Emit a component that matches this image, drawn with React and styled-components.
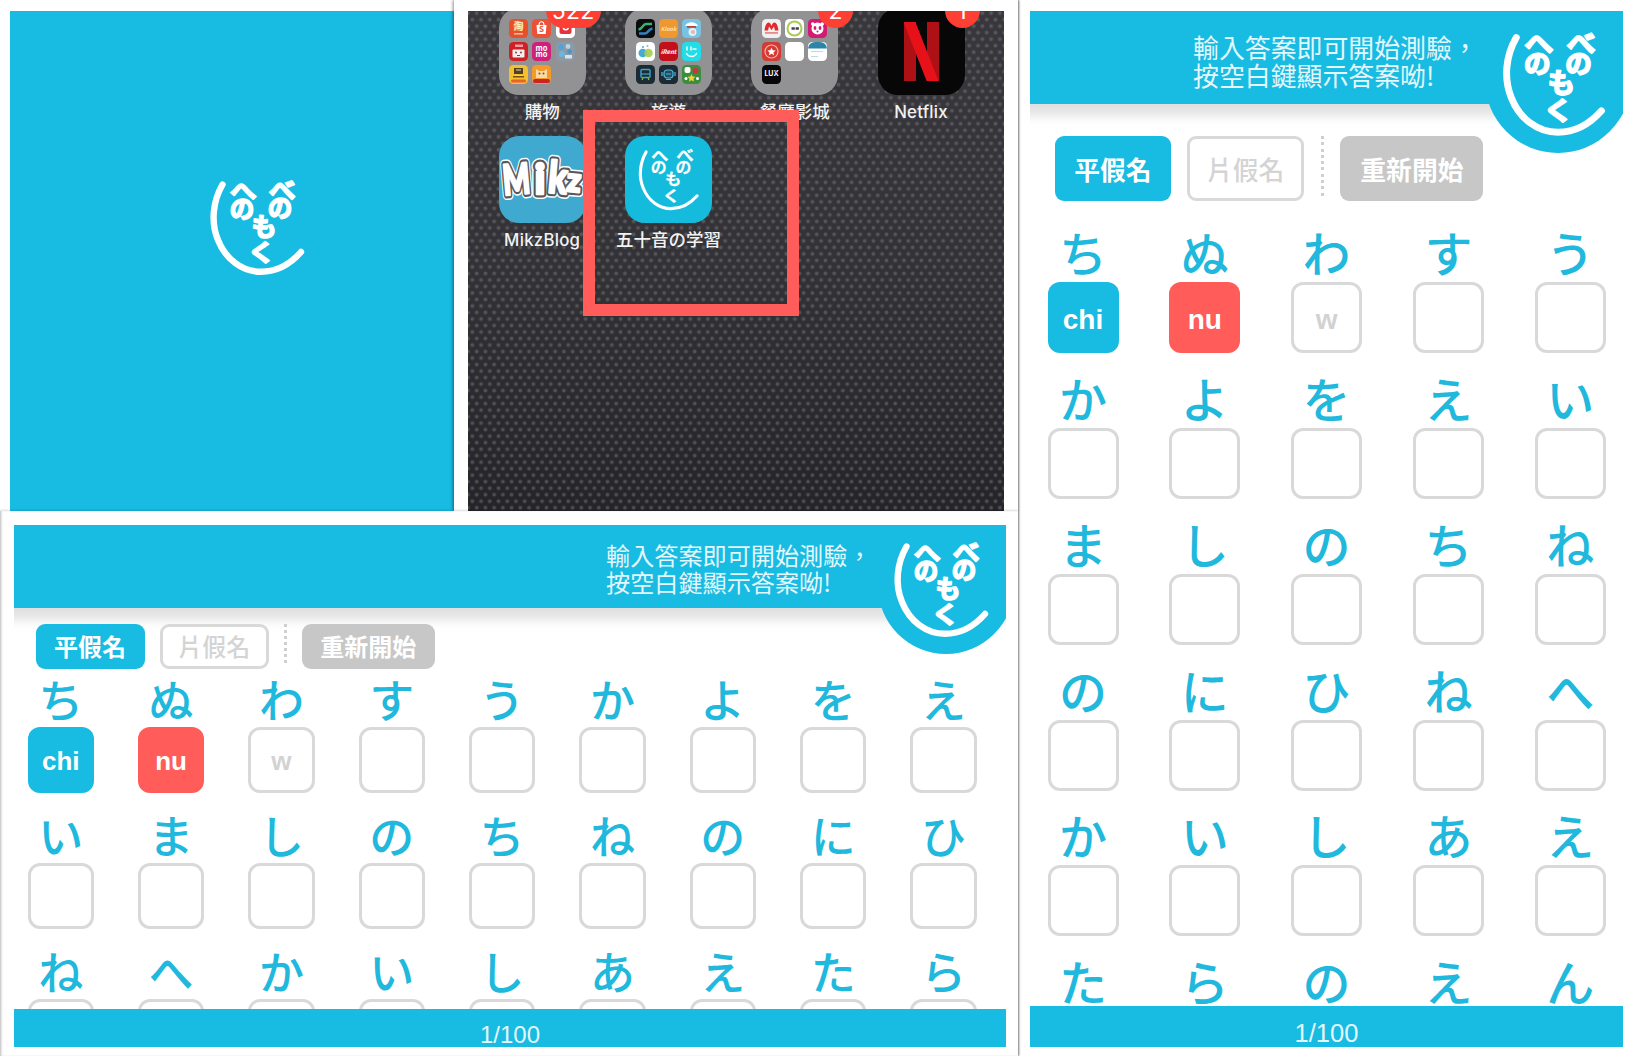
import React from "react";
import styled, { createGlobalStyle, css } from "styled-components";

const BLUE = "#18bbe2";
const RED = "#ff5c5a";
const LINE = "#d9d9d9";
const KANA_FONT = '"Noto Sans CJK JP", sans-serif';
const TC_FONT = '"Liberation Sans", "Noto Sans CJK TC", sans-serif';

const GlobalStyle = createGlobalStyle`
  body { margin: 0; background: #fff; }
  * { box-sizing: border-box; }
`;

const Page = styled.main`
  display: flex;
  width: 1633px;
  height: 1056px;
  overflow: hidden;
  background: #fff;
  font-family: ${TC_FONT};
`;

const LeftColumn = styled.div`
  display: flex;
  flex-direction: column;
  width: 1018px;
  flex: none;
  position: relative;
  z-index: 1;
  box-shadow: 1px 0 2px rgba(0, 0, 0, 0.5);
`;

const TopRow = styled.div`
  display: flex;
  height: 511px;
  flex: none;
`;

const SplashCard = styled.section`
  width: 454px;
  flex: none;
  padding: 11px 0 0 10px;
  background: #fff;
`;

const SplashScreen = styled.div`
  height: 500px;
  padding: 149px 0 0 180px;
  background: ${BLUE};
`;

const HomeCard = styled.section`
  flex: 1;
  padding: 11px 14px 0 14px;
  background: #fff;
  box-shadow: -1px 0 3px rgba(0, 0, 0, 0.45);
`;

const HomeScreen = styled.div`
  position: relative;
  height: 500px;
  overflow: hidden;
  background:
    radial-gradient(circle at 4.35px 3.25px, rgba(128, 126, 134, 0.45) 1.3px, transparent 2.4px) 0 5.4px / 8.72px 13.02px,
    radial-gradient(circle at 4.35px 3.25px, rgba(128, 126, 134, 0.45) 1.3px, transparent 2.4px) 4.36px 11.9px / 8.72px 13.02px,
    linear-gradient(#38373b, #333236 50%, #252428);
`;

const AppGrid = styled.div`
  display: grid;
  grid-template-columns: repeat(4, 126.3px);
  grid-auto-rows: 127.7px;
  margin: -3px 0 0 11px;
`;

const AppCell = styled.div`
  display: flex;
  flex-direction: column;
  align-items: center;
`;

const AppTile = styled.div`
  position: relative;
  width: 87px;
  height: 87px;
  flex: none;
  border-radius: 20px;
  background: ${(p) => p.$bg};
`;

const AppLabel = styled.span`
  margin-top: 4px;
  height: 24px;
  line-height: ${(p) => (p.$latin ? 26 : 24)}px;
  white-space: nowrap;
  color: #f2f2f2;
  font-family: ${(p) => (p.$latin ? "Inter, sans-serif" : '"Noto Sans CJK TC", sans-serif')};
  font-size: ${(p) => (p.$latin ? 16.8 : 17.5)}px;
  font-weight: 500;
  letter-spacing: ${(p) => (p.$latin ? 0.25 : 0)}px;
`;

const FolderTile = styled(AppTile)`
  display: grid;
  grid-template-columns: repeat(3, 19px);
  grid-auto-rows: 19px;
  gap: 4.2px;
  padding: 11px 0 0 10.6px;
`;

const Badge = styled.span`
  position: absolute;
  top: -15px;
  right: -15px;
  min-width: 35px;
  height: 35px;
  padding: 0 ${(p) => (p.$wide ? 6 : 0)}px;
  border-radius: 18px;
  background: #fe3f34;
  color: #fff;
  font: 400 23px/36px Inter, sans-serif;
  letter-spacing: 0.3px;
  text-align: center;
`;

const Highlight = styled.div`
  position: absolute;
  left: 115px;
  top: 99px;
  width: 216px;
  height: 206px;
  border: 12px solid ${RED};
`;

const NetflixMark = styled.div`
  position: absolute;
  left: 26px;
  top: 14px;
  display: flex;
  justify-content: space-between;
  width: 35px;
  height: 59px;
`;

const NetflixBar = styled.i`
  width: 12px;
  height: 59px;
  background: #ad1015;
`;

const NetflixSash = styled.i`
  position: absolute;
  inset: 0;
  background: #e61119;
  clip-path: polygon(0 0, 34% 0, 100% 100%, 66% 100%);
`;

/* ---- quiz screens ---- */

const QuizCard = styled.section`
  flex: 1;
  min-width: 0;
  min-height: 0;
  background: #fff;
  ${(p) =>
    p.$wide
      ? css`
          padding: 14px 12px 9px 14px;
          border-left: 1px solid #cfcfcf;
          box-shadow: 0 -1px 2px rgba(0, 0, 0, 0.14), inset 1px 0 2px rgba(0, 0, 0, 0.12);
          position: relative;
        `
      : css`
          padding: 11px 10px 9.5px 12px;
        `}
`;

const Screen = styled.div`
  display: flex;
  flex-direction: column;
  height: 100%;
  position: relative;
  overflow: hidden;
  margin-left: ${(p) => (p.$wide ? -1 : 0)}px;
`;

const Header = styled.header`
  position: relative;
  z-index: 1;
  flex: none;
  height: ${(p) => (p.$wide ? 83 : 93)}px;
  padding: ${(p) => (p.$wide ? "17px 0 0 592px" : "21.5px 0 0 163px")};
  background: ${BLUE};
`;

const HeaderShade = styled.div`
  flex: none;
  height: 24px;
  margin-bottom: ${(p) => (p.$wide ? -8.5 : 8)}px;
  background: linear-gradient(#dfdfdf, #e9e8e8 8px, #fbfbfb 17px, #fff 22px);
`;

const Hint = styled.p`
  margin: 0;
  color: #e4f7fc;
  font-family: "Noto Sans CJK TC", sans-serif;
  font-weight: 400;
  white-space: pre;
  font-size: ${(p) => (p.$wide ? 24.15 : 25.9)}px;
  line-height: ${(p) => (p.$wide ? 26.8 : 28.8)}px;
`;

const Medallion = styled.div`
  position: absolute;
  border-radius: 50%;
  background: ${BLUE};
  ${(p) =>
    p.$wide
      ? css`left: 864px; top: -7px; width: 136px; height: 136px;`
      : css`left: 455px; top: -4px; width: 146px; height: 146px;`}
`;

const MedallionLogo = styled.div`
  position: absolute;
  ${(p) => (p.$wide ? css`left: 860px; top: -3px;` : css`left: 450.5px; top: 0;`)}
`;

const Toolbar = styled.nav`
  display: flex;
  position: relative;
  flex: none;
  height: ${(p) => (p.$wide ? 45.5 : 65)}px;
  padding-left: ${(p) => (p.$wide ? 21.5 : 24.5)}px;
`;

const ToolButton = styled.button`
  display: block;
  flex: none;
  height: 100%;
  padding: 0 0 ${(p) => (p.$wide ? 1.5 : 0)}px;
  font-family: "Noto Sans CJK TC", sans-serif;
  font-weight: ${(p) => (p.$kind === "off" ? 500 : 700)};
  border-radius: 9px;
  border: ${(p) => (p.$kind === "off" ? `3px solid ${LINE}` : "0")};
  background: ${(p) => ({ on: BLUE, off: "#fff", reset: "#c7c7c7" })[p.$kind]};
  color: ${(p) => (p.$kind === "off" ? "#d4d4d4" : "#fff")};
  ${(p) =>
    p.$wide
      ? css`
          width: ${p.$kind === "reset" ? 133 : 109}px;
          font-size: 24px;
          margin-left: ${p.$kind === "off" ? 15.3 : 0}px;
        `
      : css`
          width: ${p.$kind === "reset" ? 143 : 116.8}px;
          font-size: 25.8px;
          margin-left: ${p.$kind === "off" ? 16 : 0}px;
        `}
`;

const DottedRule = styled.i`
  flex: none;
  width: 3px;
  height: ${(p) => (p.$wide ? 40 : 60)}px;
  margin: ${(p) => (p.$wide ? "0 14.8px 0 15.2px" : "0 16.3px 0 17px")};
  background: repeating-linear-gradient(
    #cfcfcf 0 3px,
    transparent 3px ${(p) => (p.$wide ? 6 : 6.3)}px
  );
`;

const Board = styled.div`
  flex: 1;
  min-height: 0;
  overflow: hidden;
  display: grid;
  justify-content: start;
  align-content: start;
  ${(p) =>
    p.$wide
      ? css`
          grid-template-columns: repeat(9, 110.35px);
          grid-auto-rows: 136.3px;
          padding: 2.7px 0 0 13.5px;
        `
      : css`
          grid-template-columns: repeat(5, 121.8px);
          grid-auto-rows: 145.8px;
          padding: 25.3px 0 0 17.5px;
        `}
`;

const Cell = styled.div`
  display: flex;
  flex-direction: column;
  align-items: center;
  width: ${(p) => (p.$wide ? 66.5 : 71)}px;
`;

const Kana = styled.span`
  flex: none;
  height: ${(p) => (p.$wide ? 55 : 56)}px;
  line-height: ${(p) => (p.$wide ? 53 : 51)}px;
  color: #20b8dc;
  font-family: ${KANA_FONT};
  font-weight: 500;
  font-size: ${(p) => (p.$wide ? 45 : 48)}px;
`;

const Answer = styled.div`
  display: flex;
  flex: none;
  align-items: center;
  justify-content: center;
  width: ${(p) => (p.$wide ? 66.5 : 71)}px;
  height: ${(p) => (p.$wide ? 66.5 : 71)}px;
  padding-top: ${(p) => (p.$wide ? 3 : 4.5)}px;
  border-radius: 12px;
  border: ${(p) => (p.$state === "right" || p.$state === "wrong" ? "0" : `3px solid ${LINE}`)};
  background: ${(p) => ({ right: BLUE, wrong: RED })[p.$state] || "#fff"};
  color: ${(p) => (p.$state === "typing" ? "#d2d2d2" : "#fff")};
  font: 700 ${(p) => (p.$wide ? 26 : 28)}px "Liberation Sans", sans-serif;
`;

const Footer = styled.footer`
  flex: none;
  height: ${(p) => (p.$wide ? 38 : 40.5)}px;
  padding-top: ${(p) => (p.$wide ? 12 : 13)}px;
  background: ${BLUE};
  color: #e4f7fc;
  text-align: center;
  font: 400 ${(p) => (p.$wide ? 24 : 25.5)}px/28px "Liberation Sans", sans-serif;
`;

/* ---- drawings ---- */

function FaceLogo({ scale = 1, arc = 6.4, bold = 1.7 }) {
  return (
    <svg width={140 * scale} height={130 * scale} viewBox="0 0 140 130" display="block">
      <path
        d="M32.5 24.5C23 41 20.5 62 28 80C35.5 99 52 111.8 71 111.8C88 111.8 100 104.5 111 92"
        fill="none"
        stroke="#fff"
        strokeWidth={arc}
        strokeLinecap="round"
      />
      <g
        fill="#fff"
        stroke="#fff"
        strokeWidth={bold}
        strokeLinejoin="round"
        fontFamily="Noto Sans CJK JP, sans-serif"
        fontWeight="700"
        textAnchor="middle"
      >
        <text transform="translate(53.3 39) scale(1 .86)" fontSize="27">へ</text>
        <text x="52" y="57.5" fontSize="24.5">の</text>
        <text transform="translate(92.3 39) scale(1 .9)" fontSize="27">べ</text>
        <text x="90" y="57.3" fontSize="24.5">の</text>
        <text x="74" y="75.5" fontSize="25">も</text>
        <text transform="translate(71.5 100.5) scale(1.2 1)" fontSize="23.5">く</text>
      </g>
    </svg>
  );
}

function MikzLogo() {
  const letters = [
    ["M", 18.5, 58, 42, -5, 0.68],
    ["i", 41, 58, 42, 0, 1],
    ["k", 57.5, 57, 44, 5, 0.78],
    ["z", 74, 55.5, 33, 5, 0.92],
  ];
  const layer = (color, width) =>
    letters.map(([ch, x, y, size, turn, stretch]) => (
      <text
        key={ch}
        fontSize={size}
        transform={`translate(${x} ${y}) rotate(${turn}) scale(${stretch} 1)`}
        fill={color}
        stroke={color}
        strokeWidth={width}
        strokeLinejoin="round"
      >
        {ch}
      </text>
    ));
  return (
    <svg width="87" height="87" viewBox="0 0 87 87" fontFamily="Lato, sans-serif" fontWeight="900" textAnchor="middle">
      <g>{layer("#fff", 10)}</g>
      <g>{layer("#58595e", 7)}</g>
      <g>{layer("#fff", 2.6)}</g>
    </svg>
  );
}

function Mini({ bg, children }) {
  return (
    <svg width="19" height="19" viewBox="0 0 19 19" fontFamily="Noto Sans CJK TC, sans-serif" fontWeight="700" textAnchor="middle">
      <rect width="19" height="19" rx="4.5" fill={bg} />
      {children}
    </svg>
  );
}

const shoppingIcons = (
  <>
    <Mini bg="#e8502c">
      <circle cx="9.5" cy="7" r="5" fill="#f29a3a" />
      <text x="9.5" y="11" fontSize="10" fill="#ffe9c0">淘</text>
      <rect x="5" y="14" width="9" height="1.6" fill="#f6b7a0" />
    </Mini>
    <Mini bg="#ea5137">
      <path d="M4.5 6h10l-.8 9H5.3z" fill="#fff" />
      <path d="M7 6.500c0-5 5-5 5 0" fill="none" stroke="#fff" strokeWidth="1.2" />
      <text x="9.500" y="13.300" fontSize="8" fill="#ea5137">S</text>
    </Mini>
    <Mini bg="#fff">
      <rect x="3.500" y="2" width="12" height="13" rx="2" fill="#e4333c" />
      <path d="M7 7c0 5 5.500 5 5.500 0" fill="none" stroke="#fff" strokeWidth="1.500" />
    </Mini>
    <Mini bg="#cf1f27">
      <rect x="6" y="2.500" width="8" height="2.500" fill="#ee9a9a" />
      <rect x="3.500" y="7.500" width="12" height="8" rx="1" fill="#f6eeee" />
      <circle cx="7" cy="10.500" r="1" fill="#8d4040" />
      <circle cx="12" cy="10.500" r="1" fill="#8d4040" />
      <rect x="8" y="13" width="3" height="1" fill="#cf1f27" />
    </Mini>
    <Mini bg="#d0207c">
      <text x="9.500" y="9" fontSize="7.500" fill="#fff">mo</text>
      <text x="9.500" y="14.500" fontSize="7.500" fill="#fff">mo</text>
    </Mini>
    <Mini bg="#8c9aa6">
      <circle cx="5" cy="5" r="2.800" fill="#4fa3dc" />
      <circle cx="12" cy="4.500" r="2.400" fill="#b6d4e8" />
      <circle cx="6" cy="12" r="3" fill="#6db4e0" />
      <circle cx="13.500" cy="9.500" r="2.200" fill="#4c93c8" />
      <rect x="9" y="13" width="7" height="3.500" fill="#d9e4ea" />
    </Mini>
    <Mini bg="#f5c02e">
      <path d="M5 3h9v6H5z" fill="#53401f" />
      <path d="M7 5h5M6 11h8" stroke="#e8e0c0" strokeWidth="1.200" />
      <rect x="4" y="11" width="11" height="1.500" fill="#7b4a1a" />
      <rect x="2" y="14.500" width="15" height="3" rx="1.500" fill="#e8612e" />
    </Mini>
    <Mini bg="#f39a2c">
      <path d="M4 4l3 2h5l3-2v9H4z" fill="#fbd9a2" />
      <circle cx="7.500" cy="8.500" r="1" fill="#8a4c1c" />
      <circle cx="11.500" cy="8.500" r="1" fill="#8a4c1c" />
      <rect x="1" y="14" width="17" height="4" rx="2" fill="#c8261f" />
    </Mini>
  </>
);

const travelIcons = (
  <>
    <Mini bg="#0a0c0d">
      <path d="M2.500 10.500C7 10 6.500 5 10 5h6" fill="none" stroke="#39b46c" strokeWidth="2.600" />
      <path d="M3 14.500h6c3.500 0 3-4.500 7.500-5" fill="none" stroke="#2f83c5" strokeWidth="2.600" />
    </Mini>
    <Mini bg="#ee982f">
      <text x="9.500" y="12" fontSize="5.500" fill="#ffe0b0" fontStyle="italic">Klook</text>
    </Mini>
    <Mini bg="#79c3e2">
      <path d="M3 7c2-5 11-5 13 0z" fill="#fff" />
      <rect x="5" y="7" width="9" height="1.800" fill="#b8443f" />
      <circle cx="10.500" cy="13" r="4" fill="#dff1f8" />
      <circle cx="11" cy="13" r="2" fill="#eeb1ad" />
    </Mini>
    <Mini bg="#fff">
      <circle cx="6.800" cy="11" r="4.300" fill="#43abd8" />
      <circle cx="12.500" cy="11" r="4.300" fill="#a5cf4e" opacity=".9" />
      <circle cx="7" cy="5" r="1" fill="#43abd8" />
      <circle cx="11.500" cy="4" r="1" fill="#7bbfd8" />
    </Mini>
    <Mini bg="#c30f1c">
      <text x="9.500" y="12" fontSize="6" fill="#fff" fontStyle="italic">iRent</text>
    </Mini>
    <Mini bg="#22dce8">
      <path d="M5 5v3M9 5v3M11 7h3M4.500 11.500c2 4 8 4 10 0" fill="none" stroke="#fff" strokeWidth="1.400" strokeLinecap="round" />
    </Mini>
    <Mini bg="#1b2a35">
      <rect x="5" y="4.500" width="9" height="8" rx="1" fill="none" stroke="#3fa6c8" strokeWidth="1.400" />
      <path d="M5 9h9" stroke="#3fa6c8" strokeWidth="1.200" />
      <path d="M6 15l1-2M13 15l-1-2" stroke="#8bc34a" strokeWidth="1.200" />
    </Mini>
    <Mini bg="#1b2a35">
      <rect x="5" y="5" width="9" height="8" rx="3" fill="#254b5e" stroke="#4bb8da" strokeWidth="1.200" />
      <path d="M3 7v4M16 7v4M7 14.500h5M7 9h5" stroke="#4bb8da" strokeWidth="1.200" />
    </Mini>
    <Mini bg="#3b8f3c">
      <rect x="2.500" y="2" width="6" height="6" rx="2" fill="#fff" />
      <circle cx="13.500" cy="5.500" r="3" fill="#c83740" />
      <path d="M9.500 9l1.200 2.500 2.800.3-2 2 .5 2.700-2.500-1.300-2.500 1.300.5-2.700-2-2 2.800-.3z" fill="#f1d13c" />
      <circle cx="4" cy="13.500" r="1.500" fill="#fff" />
      <circle cx="15.500" cy="13.500" r="1.500" fill="#fff" />
    </Mini>
  </>
);

const diningIcons = (
  <>
    <Mini bg="#f0eeee">
      <path d="M2.500 11.500C3.500 3 7.500 1 9.500 7C11.500 1 15.500 3 16.500 11.500H13L12 7.500L9.500 11L7 7.500L6 11.500z" fill="#df2b2c" />
      <rect x="3" y="13" width="13" height="1.800" fill="#e88b8b" />
    </Mini>
    <Mini bg="#fff">
      <circle cx="9.500" cy="9.500" r="7" fill="none" stroke="#a9cd54" strokeWidth="2" />
      <path d="M6.500 9.500h7.500" stroke="#444" strokeWidth="2.500" strokeDasharray="3.300 .8" />
    </Mini>
    <Mini bg="#d51a72">
      <circle cx="9.500" cy="9.500" r="6" fill="#fff" />
      <circle cx="4.800" cy="5" r="1.800" fill="#fff" />
      <circle cx="14.200" cy="5" r="1.800" fill="#fff" />
      <ellipse cx="7" cy="9" rx="1.400" ry="2" fill="#d51a72" />
      <ellipse cx="12" cy="9" rx="1.400" ry="2" fill="#d51a72" />
      <circle cx="9.500" cy="12.500" r="1" fill="#d51a72" />
    </Mini>
    <Mini bg="#d23a33">
      <circle cx="9.500" cy="9.500" r="6.500" fill="none" stroke="#f4b7ac" strokeWidth="1.200" />
      <path d="M9.500 5.500l1.200 2.700 3 .2-2.300 2 .8 2.900-2.700-1.500-2.700 1.500.8-2.900-2.300-2 3-.2z" fill="#fff" />
    </Mini>
    <Mini bg="#fff" />
    <Mini bg="#fff">
      <path d="M0 6.500C1 1 4 0 9.500 0S18 1 19 6.500z" fill="#2c85a8" />
      <path d="M3 9.500h12M3 14.500h7" stroke="#b9dce8" strokeWidth="1" />
    </Mini>
    <Mini bg="#070708">
      <text x="9.500" y="11" fontSize="7" fill="#fff" fontFamily="Inter, sans-serif">LUX</text>
      <path d="M13 5.500l2 2.500" stroke="#c6332c" strokeWidth="1" />
    </Mini>
  </>
);

/* ---- composition ---- */

const KANA = [..."ちぬわすうかよをえいましのちねのにひねへかいしあえたらのえん"];
const TYPED = [
  { state: "right", text: "chi" },
  { state: "wrong", text: "nu" },
  { state: "typing", text: "w" },
];

function QuizScreen({ wide, count }) {
  return (
    <QuizCard $wide={wide}>
      <Screen $wide={wide}>
        <Header $wide={wide}>
          <Medallion $wide={wide} />
          <Hint $wide={wide}>{"輸入答案即可開始測驗，\n按空白鍵顯示答案呦!"}</Hint>
          <MedallionLogo $wide={wide}>
            <FaceLogo scale={wide ? 1 : 1.085} />
          </MedallionLogo>
        </Header>
        <HeaderShade $wide={wide} />
        <Toolbar $wide={wide}>
          <ToolButton $wide={wide} $kind="on">平假名</ToolButton>
          <ToolButton $wide={wide} $kind="off">片假名</ToolButton>
          <DottedRule $wide={wide} />
          <ToolButton $wide={wide} $kind="reset">重新開始</ToolButton>
        </Toolbar>
        <Board $wide={wide}>
          {KANA.slice(0, count).map((kana, i) => (
            <Cell key={i} $wide={wide}>
              <Kana $wide={wide}>{kana}</Kana>
              <Answer $wide={wide} $state={TYPED[i]?.state}>{TYPED[i]?.text}</Answer>
            </Cell>
          ))}
        </Board>
        <Footer $wide={wide}>1/100</Footer>
      </Screen>
    </QuizCard>
  );
}

export default function App() {
  return (
    <Page>
      <GlobalStyle />
      <LeftColumn>
        <TopRow>
          <SplashCard>
            <SplashScreen>
              <FaceLogo />
            </SplashScreen>
          </SplashCard>
          <HomeCard>
            <HomeScreen>
              <AppGrid>
                <AppCell>
                  <FolderTile $bg="#929294">
                    {shoppingIcons}
                    <Badge $wide>522</Badge>
                  </FolderTile>
                  <AppLabel>購物</AppLabel>
                </AppCell>
                <AppCell>
                  <FolderTile $bg="#929294">{travelIcons}</FolderTile>
                  <AppLabel>旅遊</AppLabel>
                </AppCell>
                <AppCell>
                  <FolderTile $bg="#929294">
                    {diningIcons}
                    <Badge>2</Badge>
                  </FolderTile>
                  <AppLabel>餐廳影城</AppLabel>
                </AppCell>
                <AppCell>
                  <AppTile $bg="#070707">
                    <NetflixMark>
                      <NetflixBar />
                      <NetflixBar />
                      <NetflixSash />
                    </NetflixMark>
                    <Badge>1</Badge>
                  </AppTile>
                  <AppLabel $latin>Netflix</AppLabel>
                </AppCell>
                <AppCell>
                  <AppTile $bg="#40a9cf">
                    <MikzLogo />
                  </AppTile>
                  <AppLabel $latin>MikzBlog</AppLabel>
                </AppCell>
                <AppCell>
                  <AppTile $bg="#15bbdc">
                    <FaceLogo scale={0.65} arc={4.8} bold={0.3} />
                  </AppTile>
                  <AppLabel>五十音の学習</AppLabel>
                </AppCell>
              </AppGrid>
              <Highlight />
            </HomeScreen>
          </HomeCard>
        </TopRow>
        <QuizScreen wide count={27} />
      </LeftColumn>
      <QuizScreen count={30} />
    </Page>
  );
}
